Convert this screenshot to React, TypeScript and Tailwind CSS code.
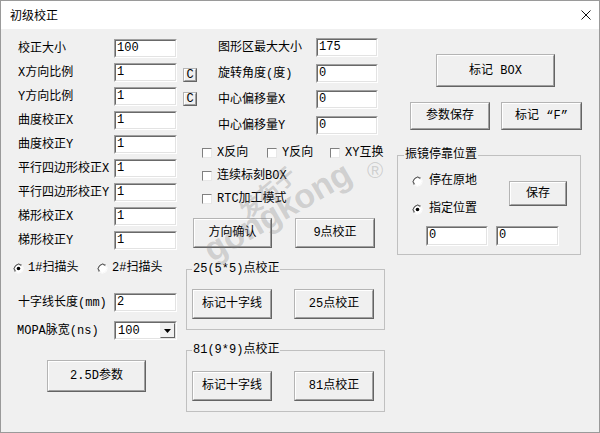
import React from "react";

type Kids = { className?: string; children?: React.ReactNode };

// sunken edit box, classic win32 client edge
function Edit({ value, className = "" }: { value: string; className?: string }) {
  return (
    <div className={`shrink-0 border border-t-[#a0a0a0] border-l-[#a0a0a0] border-b-white border-r-white ${className}`}>
      <div className="h-full border border-t-[#696969] border-l-[#696969] border-b-[#e3e3e3] border-r-[#e3e3e3] bg-white pl-[1px] leading-[15px]">
        {value}
      </div>
    </div>
  );
}

function Btn({ className = "", children }: Kids) {
  return (
    <div className={`shrink-0 border border-t-[#b4b4b4] border-l-[#b4b4b4] border-b-[#646464] border-r-[#646464] ${className}`}>
      <div className="flex h-full items-center justify-center border border-t-white border-l-white border-b-[#a0a0a0] border-r-[#a0a0a0] bg-[#f0f0f0] leading-none">
        {children}
      </div>
    </div>
  );
}

function Check({ label, className = "" }: { label: string; className?: string }) {
  return (
    <div className={`flex items-center ${className}`}>
      <div className="h-[10px] w-[10px] shrink-0 border border-t-[#808080] border-l-[#808080] border-b-[#e8e8e8] border-r-[#e8e8e8] bg-white" />
      <span className="ml-[5px] whitespace-nowrap">{label}</span>
    </div>
  );
}

function Radio({ checked = false }: { checked?: boolean }) {
  return (
    <svg width="11" height="11" viewBox="0 0 11 11" className="shrink-0">
      <circle cx="5.5" cy="5.5" r="5" fill="#fff" />
      <path d="M2 9 A5 5 0 0 1 9 2" stroke="#9a9a9a" fill="none" />
      <path d="M2.6 8.4 A4 4 0 0 1 8.4 2.6" stroke="#505050" fill="none" />
      <path d="M9 2 A5 5 0 0 1 2 9" stroke="#f8f8f8" fill="none" />
      {checked && <circle cx="5.5" cy="5.5" r="1.8" fill="#000" />}
    </svg>
  );
}

function Combo({ value, className = "" }: { value: string; className?: string }) {
  return (
    <div className={`shrink-0 border border-t-[#a0a0a0] border-l-[#a0a0a0] border-b-white border-r-white ${className}`}>
      <div className="flex h-full border border-t-[#696969] border-l-[#696969] border-b-[#e3e3e3] border-r-[#e3e3e3] bg-white">
        <span className="flex-1 pl-[2px] leading-[16px]">{value}</span>
        <div className="flex w-[15px] items-center justify-center border border-t-[#f0f0f0] border-l-[#f0f0f0] border-b-[#646464] border-r-[#646464] bg-[#f0f0f0]">
          <svg width="7" height="4" viewBox="0 0 7 4">
            <path d="M0 0 H7 L3.5 4 Z" fill="#000" />
          </svg>
        </div>
      </div>
    </div>
  );
}

function Group({ title, className = "", children }: Kids & { title: string }) {
  return (
    <fieldset className={`border border-[#c0c0c0] ${className}`}>
      <legend className="px-[1px] leading-[14px]">{title}</legend>
      {children}
    </fieldset>
  );
}

const leftRows = [
  { label: "校正大小", value: "100" },
  { label: "X方向比例", value: "1", c: true },
  { label: "Y方向比例", value: "1", c: true },
  { label: "曲度校正X", value: "1" },
  { label: "曲度校正Y", value: "1" },
  { label: "平行四边形校正X", value: "1" },
  { label: "平行四边形校正Y", value: "1" },
  { label: "梯形校正X", value: "1" },
  { label: "梯形校正Y", value: "1" },
];

const midRows = [
  { label: "图形区最大大小", value: "175" },
  { label: "旋转角度(度)", value: "0" },
  { label: "中心偏移量X", value: "0" },
  { label: "中心偏移量Y", value: "0" },
];

export default function App() {
  return (
    <div className="relative flex h-[433px] w-[600px] flex-col overflow-hidden border border-[#9a9a9a] bg-[#f0f0f0] font-['Liberation_Mono','Noto_Sans_CJK_SC',monospace] text-[12px] leading-[14px] text-black">
      {/* title bar */}
      <div className="flex h-[28px] shrink-0 items-center justify-between bg-white">
        <span className="pl-[9px] font-['Noto_Sans_CJK_SC',sans-serif] text-[12px]">初级校正</span>
        <svg width="10" height="10" viewBox="0 0 10 10" className="mr-[8px]">
          <path d="M0.5 0.5 L9.5 9.5 M9.5 0.5 L0.5 9.5" stroke="#111" strokeWidth="1" />
        </svg>
      </div>

      <div className="relative flex flex-1 pl-[15px] pt-[9px]">
        {/* left column */}
        <div className="flex w-[170px] shrink-0 flex-col">
          <div className="mt-[1px] flex flex-col gap-[5px]">
            {leftRows.map((r) => (
              <div key={r.label} className="flex h-[19px] items-center">
                <span className="w-[98px] shrink-0 whitespace-nowrap pl-[2px]">{r.label}</span>
                <Edit value={r.value} className="h-[19px] w-[63px]" />
                {r.c && <Btn className="ml-[6px] h-[14px] w-[14px] self-end">C</Btn>}
              </div>
            ))}
          </div>

          <div className="-ml-[3px] mt-[12px] flex h-[12px] items-center">
            <div className="flex w-[84px] items-center">
              <Radio checked />
              <span className="ml-[4px]">1#扫描头</span>
            </div>
            <Radio />
            <span className="ml-[4px]">2#扫描头</span>
          </div>

          <div className="mt-[19px] flex h-[19px] items-center">
            <span className="w-[98px] shrink-0 whitespace-nowrap pl-[2px]">十字线长度(mm)</span>
            <Edit value="2" className="h-[19px] w-[63px]" />
          </div>

          <div className="mt-[9px] flex h-[19px] items-center">
            <span className="w-[98px] shrink-0 whitespace-nowrap pl-[1px]">MOPA脉宽(ns)</span>
            <Combo value="100" className="h-[19px] w-[63px]" />
          </div>

          <Btn className="ml-[31px] mt-[20px] h-[32px] w-[99px]">2.5D参数</Btn>
        </div>

        {/* middle column */}
        <div className="flex w-[199px] shrink-0 flex-col">
          <div className="flex flex-col gap-[7px]">
            {midRows.map((r) => (
              <div key={r.label} className="flex h-[19px] items-center">
                <span className="w-[130px] shrink-0 whitespace-nowrap pl-[32px]">{r.label}</span>
                <Edit value={r.value} className="h-[19px] w-[62px]" />
              </div>
            ))}
          </div>

          <div className="mt-[10px] flex flex-col gap-[7px] pl-[16px]">
            <div className="flex h-[16px] items-center">
              <Check label="X反向" className="w-[65px]" />
              <Check label="Y反向" className="w-[63px]" />
              <Check label="XY互换" />
            </div>
            <Check label="连续标刻BOX" className="h-[16px]" />
            <Check label="RTC加工模式" className="h-[16px]" />
          </div>

          <div className="mt-[11px] flex pl-[7px]">
            <Btn className="h-[30px] w-[79px]">方向确认</Btn>
            <Btn className="ml-[23px] h-[30px] w-[80px]">9点校正</Btn>
          </div>

          <Group title="25(5*5)点校正" className="mt-[14px] w-[199px] pb-[10px] pl-[5px]">
            <div className="mt-[13px] flex">
              <Btn className="h-[30px] w-[80px]">标记十字线</Btn>
              <Btn className="ml-[22px] h-[30px] w-[80px]">25点校正</Btn>
            </div>
          </Group>

          <Group title="81(9*9)点校正" className="mt-[13px] w-[199px] pb-[10px] pl-[5px]">
            <div className="mt-[14px] flex">
              <Btn className="h-[30px] w-[80px]">标记十字线</Btn>
              <Btn className="ml-[22px] h-[30px] w-[80px]">81点校正</Btn>
            </div>
          </Group>
        </div>

        {/* right column */}
        <div className="ml-[12px] flex w-[185px] shrink-0 flex-col">
          <Btn className="ml-[39px] mt-[16px] h-[33px] w-[119px]">标记 BOX</Btn>
          <div className="mt-[15px] flex">
            <Btn className="ml-[13px] h-[28px] w-[80px]">参数保存</Btn>
            <Btn className="ml-[11px] h-[28px] w-[81px] whitespace-pre">标记 “F”</Btn>
          </div>

          <Group title="振镜停靠位置" className="mt-[18px] w-[184px] pb-[8px] pl-[6px]">
            <div className="mt-[12px] flex items-start">
              <div className="ml-[8px] flex w-[97px] flex-col gap-[14px]">
                <div className="flex h-[14px] items-center">
                  <Radio />
                  <span className="ml-[6px]">停在原地</span>
                </div>
                <div className="flex h-[14px] items-center">
                  <Radio checked />
                  <span className="ml-[6px]">指定位置</span>
                </div>
              </div>
              <Btn className="mt-[7px] h-[25px] w-[58px]">保存</Btn>
            </div>
            <div className="ml-[22px] mt-[10px] flex gap-[8px]">
              <Edit value="0" className="h-[20px] w-[62px]" />
              <Edit value="0" className="h-[20px] w-[63px]" />
            </div>
          </Group>
        </div>

        {/* site watermark */}
        <div className="pointer-events-none absolute left-[240px] top-[170px] origin-left -rotate-[40deg] font-['Noto_Sans_CJK_SC',sans-serif] text-[22px] font-bold leading-[26px] text-[#808080]/30">
          发布于
        </div>
        <div className="pointer-events-none absolute left-[205px] top-[203px] origin-left -rotate-[30deg] font-['Liberation_Sans',sans-serif] text-[34px] font-bold leading-[40px] text-[#808080]/30">
          gongkong
        </div>
        <div className="pointer-events-none absolute left-[366px] top-[130px] font-['Liberation_Sans',sans-serif] text-[22px] leading-[24px] text-[#808080]/30">
          ®
        </div>
      </div>
    </div>
  );
}
